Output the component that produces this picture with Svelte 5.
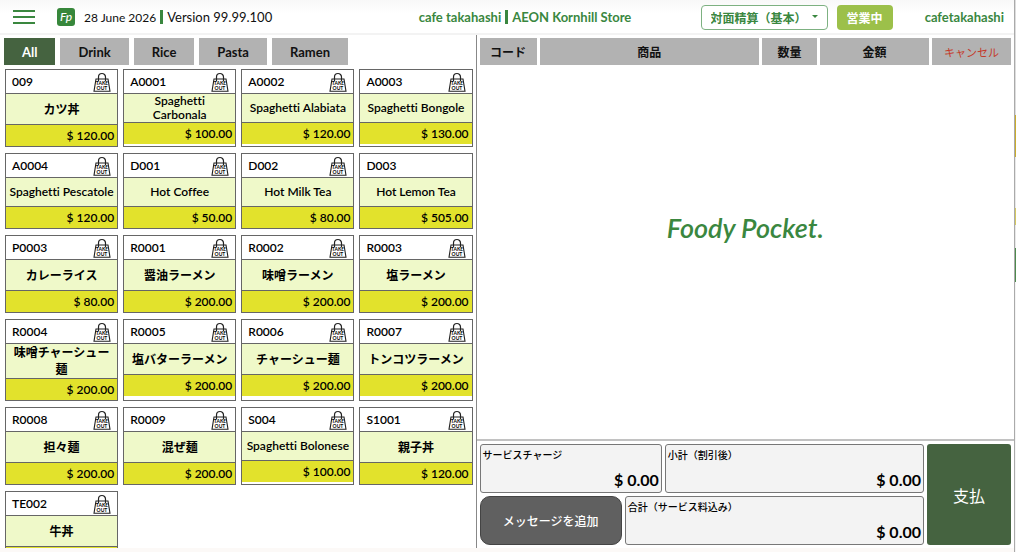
<script lang="ts">
  type Product = {
    code: string;
    name: string;
    price: number;
    takeOut?: boolean;
  };

  const categories = ['All', 'Drink', 'Rice', 'Pasta', 'Ramen'];

  const products: Product[] = [
    { code: '009', name: 'カツ丼', price: 120 },
    { code: 'A0001', name: 'Spaghetti\nCarbonala', price: 100 },
    { code: 'A0002', name: 'Spaghetti Alabiata', price: 120 },
    { code: 'A0003', name: 'Spaghetti Bongole', price: 130 },
    { code: 'A0004', name: 'Spaghetti Pescatole', price: 120 },
    { code: 'D001', name: 'Hot Coffee', price: 50 },
    { code: 'D002', name: 'Hot Milk Tea', price: 80 },
    { code: 'D003', name: 'Hot Lemon Tea', price: 505, takeOut: false },
    { code: 'P0003', name: 'カレーライス', price: 80 },
    { code: 'R0001', name: '醤油ラーメン', price: 200 },
    { code: 'R0002', name: '味噌ラーメン', price: 200 },
    { code: 'R0003', name: '塩ラーメン', price: 200 },
    { code: 'R0004', name: '味噌チャーシュー麺', price: 200 },
    { code: 'R0005', name: '塩バターラーメン', price: 200 },
    { code: 'R0006', name: 'チャーシュー麺', price: 200 },
    { code: 'R0007', name: 'トンコツラーメン', price: 200 },
    { code: 'R0008', name: '担々麺', price: 200 },
    { code: 'R0009', name: '混ぜ麺', price: 200 },
    { code: 'S004', name: 'Spaghetti Bolonese', price: 100 },
    { code: 'S1001', name: '親子丼', price: 120 },
    { code: 'TE002', name: '牛丼', price: 120 },
  ];

  let category = $state('All');
  let mode = $state('対面精算（基本）');

  const money = (value: number) => `$ ${value.toFixed(2)}`;
  const isJapanese = (text: string) => /[^\x00-\x7f]/.test(text);
</script>

<div class="app">
  <div class="screen">
    <header>
      <button class="menu" aria-label="Menu">
        <svg viewBox="0 0 22 16" width="22" height="16">
          <path d="M0 2h22M0 8h22M0 14h22" stroke="#3a873f" stroke-width="2" />
        </svg>
      </button>
      <svg class="app-icon" viewBox="0 0 18 18" width="18" height="18">
        <rect width="18" height="18" rx="3" fill="#37873b" />
        <text x="9" y="13" text-anchor="middle">Fp</text>
      </svg>
      <div class="version">
        <span class="date">28 June 2026</span>
        <i class="bar"></i>
        <span>Version 99.99.100</span>
      </div>
      <div class="store">
        <span>cafe takahashi</span>
        <i class="bar"></i>
        <span>AEON Kornhill Store</span>
      </div>
      <div class="mode">
        <select bind:value={mode} aria-label="精算モード">
          <option>対面精算（基本）</option>
        </select>
        <svg viewBox="0 0 6 4" width="6" height="4"><path d="M0 0h6L3 3z" fill="#3a873f" /></svg>
      </div>
      <button class="open">営業中</button>
      <a class="user" href="#account">cafetakahashi</a>
    </header>

    <main>
      <section class="catalog">
        <nav>
          {#each categories as item}
            <button class:active={item === category} onclick={() => (category = item)}>{item}</button>
          {/each}
        </nav>
        <div class="products">
          {#each products as product}
            <button class="product">
              <span class="head">
                {product.code}
                {#if product.takeOut !== false}
                  <svg viewBox="0 0 18 20" width="18" height="20">
                    <path d="M3 7h12l2 12.3H1z" fill="none" stroke="#222" stroke-width="1.1" />
                    <path d="M5.5 9V5a3.5 3.5 0 0 1 7 0v4" fill="none" stroke="#222" stroke-width="1.2" />
                    <text x="9" y="13" text-anchor="middle">TAKE</text>
                    <text x="9" y="18" text-anchor="middle">OUT</text>
                  </svg>
                {/if}
              </span>
              <span class="name" class:japanese={isJapanese(product.name)}>{product.name}</span>
              <span class="price">{money(product.price)}</span>
            </button>
          {/each}
        </div>
      </section>

      <section class="order">
        <table>
          <thead>
            <tr>
              <th class="code">コード</th>
              <th>商品</th>
              <th class="qty">数量</th>
              <th class="amount">金額</th>
              <th class="cancel">キャンセル</th>
            </tr>
          </thead>
        </table>
        <div class="empty">
          <span class="brand">Foody Pocket.</span>
        </div>
        <footer>
          <div class="totals">
            <div class="line">
              <div class="box service"><span>サービスチャージ</span><b>{money(0)}</b></div>
              <div class="box"><span>小計（割引後）</span><b>{money(0)}</b></div>
            </div>
            <div class="line">
              <button class="message">メッセージを追加</button>
              <div class="box"><span>合計（サービス料込み）</span><b>{money(0)}</b></div>
            </div>
          </div>
          <button class="pay">支払</button>
        </footer>
      </section>
    </main>
  </div>
  <div class="edge"></div>
</div>

<style>
  :global(body) {
    background: #fcf9f7;
  }

  .app {
    display: flex;
    height: 100vh;
    overflow: hidden;
    font-family: Lato, 'Noto Sans CJK JP', sans-serif;
    font-size: 13px;
    font-variant-ligatures: none;
    color: #111;
  }

  .app :global(*) {
    box-sizing: border-box;
  }

  button,
  select {
    font: inherit;
    font-variant-ligatures: none;
    color: inherit;
    border: none;
    padding: 0;
    cursor: pointer;
  }

  .screen {
    flex: 1;
    min-width: 0;
    display: flex;
    flex-direction: column;
    padding-bottom: 4px;
  }

  header {
    display: flex;
    align-items: center;
    height: 35px;
    flex-shrink: 0;
    padding: 1px 10px 0 13px;
    background: linear-gradient(#f8f8f8, #fff 14px);
    border-bottom: 2px solid #f3f3f3;
  }

  .menu {
    display: flex;
    background: none;
  }

  .app-icon {
    margin: 0 9px 0 22px;
  }

  .app-icon text {
    font-size: 12px;
    font-weight: 500;
    font-style: italic;
    fill: #fff;
  }

  .version,
  .store {
    display: flex;
    align-items: center;
    gap: 4px;
    white-space: nowrap;
  }

  .version {
    flex: 1;
  }

  .date {
    font-size: 12px;
  }

  .bar {
    width: 3px;
    height: 14px;
    background: #3a873f;
  }

  .store {
    color: #3a873f;
    font-weight: 700;
    margin-right: 7%;
  }

  .mode {
    position: relative;
    display: flex;
    align-items: center;
  }

  .mode select {
    appearance: none;
    width: 127px;
    height: 25px;
    padding: 2px 20px 0 9px;
    border: 1px solid #7db181;
    border-radius: 4px;
    background: #fff;
    color: #3a873f;
    font-size: 12px;
    font-weight: 600;
  }

  .mode svg {
    position: absolute;
    right: 10px;
  }

  .open {
    height: 25px;
    padding: 0 10px;
    margin: 0 32px 0 9px;
    border-radius: 4px;
    background: #9cc04a;
    color: #fff;
    font-size: 12px;
    font-weight: 600;
  }

  .user {
    color: #3a873f;
    font-weight: 700;
    text-decoration: none;
  }

  main {
    flex: 1;
    min-height: 0;
    display: grid;
    grid-template-columns: 469fr 531fr;
    background: #fff;
  }

  .catalog {
    min-height: 0;
    overflow: hidden;
    padding: 3px 3px 0 4px;
  }

  nav {
    display: flex;
    gap: 5px;
    margin-bottom: 4px;
  }

  nav button {
    height: 27px;
    padding: 0 18px;
    background: #b2b2b2;
    font-weight: 700;
  }

  nav .active {
    background: #456340;
    color: #fff;
  }

  .products {
    display: grid;
    grid-template-columns: repeat(4, 1fr);
    gap: 6px 5px;
    padding-left: 1px;
  }

  .product {
    display: flex;
    flex-direction: column;
    justify-content: flex-start;
    min-width: 0;
    border: 1px solid #666;
    background: #fff;
    color: #000;
    font-size: 12px;
    font-weight: 600;
  }

  .head {
    display: flex;
    align-items: center;
    justify-content: space-between;
    width: 100%;
    height: 23px;
    padding: 0 6px;
  }

  .head svg text {
    font-size: 5px;
    font-weight: 700;
  }

  .name {
    display: flex;
    align-items: center;
    justify-content: center;
    width: 100%;
    min-height: 29px;
    border-top: 1px solid #666;
    background: #eff9c9;
    line-height: 14px;
    white-space: pre-line;
  }

  .name.japanese {
    min-height: 31px;
    padding: 0 6px;
    line-height: 17px;
  }

  .price {
    width: 100%;
    height: 22px;
    padding-right: 3px;
    border-top: 1px solid #666;
    background: #e2e22c;
    line-height: 21px;
    text-align: right;
  }

  .order {
    display: flex;
    flex-direction: column;
    min-width: 0;
    border-left: 1px solid #888;
  }

  table {
    width: 100%;
    table-layout: fixed;
    border-spacing: 3px;
  }

  th {
    height: 27px;
    padding: 0;
    background: #b2b2b2;
    font-size: 12px;
    font-weight: 600;
  }

  .code {
    width: 57px;
  }

  .qty {
    width: 55px;
  }

  .amount {
    width: 109px;
  }

  .cancel {
    width: 79px;
    color: #c43a2a;
    font-size: 11px;
    font-weight: 400;
  }

  .empty {
    flex: 1;
    display: flex;
    align-items: center;
    justify-content: center;
    padding-bottom: 52px;
  }

  .brand {
    color: #3a873f;
    font-size: 27px;
    font-weight: 600;
    font-style: italic;
  }

  footer {
    display: flex;
    gap: 3px;
    padding: 3px;
    border-top: 2px solid #c2c2c2;
  }

  .totals {
    flex: 1;
    display: flex;
    flex-direction: column;
    gap: 3px;
  }

  .line {
    display: flex;
    gap: 3px;
  }

  .box {
    flex: 1;
    display: flex;
    flex-direction: column;
    justify-content: space-between;
    height: 49px;
    padding: 3px 2px 2px;
    border: 1px solid #777;
    border-radius: 3px;
    background: #f3f3f3;
    color: #000;
    font-size: 10px;
    font-weight: 500;
    line-height: 15px;
  }

  .service {
    flex: 0 0 41%;
  }

  .box b {
    font-size: 16px;
    font-weight: 700;
    line-height: 20px;
    text-align: right;
  }

  .message {
    flex: 0 0 32%;
    border: 1px solid #444;
    border-radius: 10px;
    background: #606060;
    color: #fff;
    font-size: 12px;
    font-weight: 500;
  }

  .pay {
    width: 84px;
    border-radius: 3px;
    background: #456340;
    color: #fff;
    font-size: 16px;
  }

  /* sliver of the neighbouring pane */
  .edge {
    flex: 0 0 2px;
    border-left: 1px solid #aaa;
    background: linear-gradient(
      #ddd 115px,
      #c9ac2c 115px 157px,
      #e8e8e8 157px 208px,
      #d4c860 208px 225px,
      #e8e8e8 225px 248px,
      #4d8a4d 248px 282px,
      #f4f4f4 282px
    );
  }
</style>
